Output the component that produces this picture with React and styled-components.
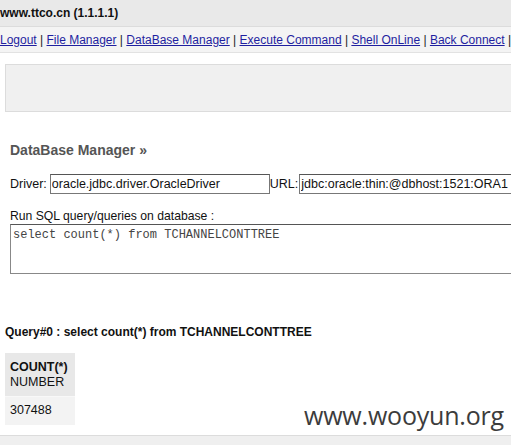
import styled, { createGlobalStyle } from "styled-components";

const GlobalStyle = createGlobalStyle`
  html, body {
    margin: 0;
    padding: 0;
    background: #fff;
    overflow: hidden;
  }
  body {
    font-family: "Liberation Sans", Arial, sans-serif;
    font-size: 12px;
    color: #000;
  }
`;

const links = [
  "Logout",
  "File Manager",
  "DataBase Manager",
  "Execute Command",
  "Shell OnLine",
  "Back Connect",
];

const App = () => {
  return (
    <Page>
      <GlobalStyle />
      <Header>www.ttco.cn (1.1.1.1)</Header>
      <Nav>
        {links.map((l) => (
          <span key={l}>
            <NavLink href="#">{l}</NavLink>
            <Sep> | </Sep>
          </span>
        ))}
      </Nav>
      <InfoBox />
      <Title>DataBase Manager »</Title>
      <FieldRow>
        <Label gap="3px">Driver:</Label>
        <Field width="220px" defaultValue="oracle.jdbc.driver.OracleDriver" />
        <Label gap="1px">URL:</Label>
        <Field width="240px" defaultValue="jdbc:oracle:thin:@dbhost:1521:ORA1" />
      </FieldRow>
      <SqlLabel>Run SQL query/queries on database :</SqlLabel>
      <SqlBox defaultValue="select count(*) from TCHANNELCONTTREE" />
      <QueryLine>Query#0 : select count(*) from TCHANNELCONTTREE</QueryLine>
      <Result>
        <thead>
          <tr>
            <HeadCell>
              <b>COUNT(*)</b>
              <br />
              NUMBER
            </HeadCell>
          </tr>
        </thead>
        <tbody>
          <tr>
            <Cell>307488</Cell>
          </tr>
        </tbody>
      </Result>
      <Footer />
      <Watermark>www.wooyun.org</Watermark>
    </Page>
  );
};

const Page = styled.div`
  position: relative;
  width: 511px;
  height: 445px;
  overflow: hidden;
`;

const Header = styled.div`
  height: 27px;
  line-height: 26px;
  background: #e9e9e9;
  border-bottom: 1px solid #dcdcdc;
  font-weight: bold;
  font-size: 12px;
  color: #111;
  box-sizing: border-box;
`;

const Nav = styled.div`
  height: 26px;
  line-height: 26px;
  background: #f4f4f4;
  border-bottom: 1px solid #e2e2e2;
  font-size: 12px;
  white-space: nowrap;
  box-sizing: border-box;
`;

const NavLink = styled.a`
  color: #1f1fa0;
  text-decoration: underline;
`;

const Sep = styled.span`
  color: #222;
`;

const InfoBox = styled.div`
  margin: 11px 0 0 5px;
  height: 48px;
  background: #f0f0f0;
  border: 1px solid #dcdcdc;
  border-right: none;
  box-sizing: border-box;
`;

const Title = styled.div`
  margin: 30px 0 0 10px;
  font-size: 14px;
  font-weight: bold;
  color: #555;
`;

const FieldRow = styled.div`
  display: flex;
  align-items: center;
  margin: 16px 0 0 10px;
  white-space: nowrap;
`;

const Label = styled.span`
  font-size: 12.5px;
  color: #111;
  margin-right: ${(p) => p.gap || "2px"};
`;

const Field = styled.input`
  width: ${(p) => p.width};
  flex: none;
  height: 20px;
  box-sizing: border-box;
  border: 1px solid #777;
  border-top-color: #555;
  padding: 0 1px;
  font-family: "Liberation Sans", Arial, sans-serif;
  font-size: 12.5px;
  color: #111;
  outline: none;
`;

const SqlLabel = styled.div`
  margin: 15px 0 0 10px;
  font-size: 12.2px;
  color: #111;
`;

const SqlBox = styled.textarea`
  display: block;
  margin: 1px 0 0 10px;
  width: 510px;
  height: 50px;
  box-sizing: border-box;
  border: 1px solid #888;
  border-top-color: #555;
  padding: 3px 2px;
  font-family: "Liberation Mono", "Courier New", monospace;
  font-size: 12px;
  color: #444;
  resize: none;
  outline: none;
`;

const QueryLine = styled.div`
  margin: 51px 0 0 5px;
  font-size: 12px;
  font-weight: bold;
  color: #111;
`;

const Result = styled.table`
  margin: 14px 0 0 5px;
  border-collapse: collapse;
  width: 70px;
`;

const HeadCell = styled.th`
  background: #e8e8e8;
  text-align: left;
  font-weight: normal;
  font-size: 12.5px;
  line-height: 15px;
  padding: 7px 5px 6px 5px;
  border-bottom: 1px solid #f8f8f8;
  color: #111;
  b {
    font-weight: bold;
  }
`;

const Cell = styled.td`
  background: #f3f3f3;
  font-size: 12.5px;
  padding: 6px 5px 8px 5px;
  color: #111;
`;

const Footer = styled.div`
  margin-top: 10px;
  height: 14px;
  background: #efefef;
  border-top: 1px solid #dcdcdc;
`;

const Watermark = styled.div`
  position: absolute;
  left: 304px;
  top: 398px;
  font-family: "Open Sans", sans-serif;
  font-size: 25px;
  color: #3c3c3c;
  letter-spacing: -0.2px;
`;

export default App;
